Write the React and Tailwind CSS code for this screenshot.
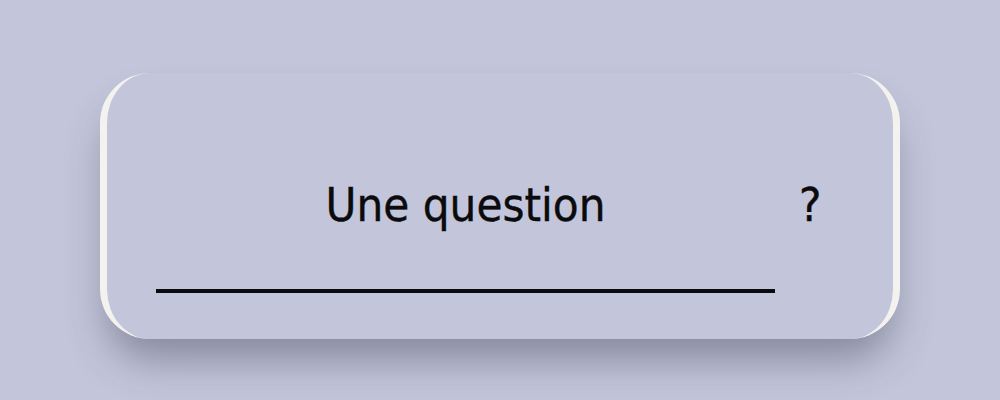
import React from "react";

const App = () => {
  return (
    <div className="w-[1000px] h-[400px] bg-[#c3c6da] pt-[73px] px-[100px] overflow-hidden">
      {/* Card */}
      <div className="h-[266px] rounded-[50px] border-x-[7px] border-[#f4f2ef] bg-[#c3c6da] shadow-[0_28px_40px_-8px_rgba(60,62,85,0.45)] pl-[49px] pt-[102px]">
        <div className="flex items-start">
          <div className="w-[619px] flex flex-col items-center">
            <span className="text-[47px] leading-[60px] text-[#0b0b0d] [-webkit-text-stroke:0.4px_#0b0b0d] font-['DejaVu_Sans_Condensed','DejaVu_Sans',sans-serif]">
              Une question
            </span>
            <div className="mt-[54px] w-full h-[4px] bg-[#0b0b0d]" />
          </div>
          <span className="ml-[24px] text-[47px] leading-[60px] text-[#0b0b0d] [-webkit-text-stroke:0.4px_#0b0b0d] font-['DejaVu_Sans_Condensed','DejaVu_Sans',sans-serif]">
            ?
          </span>
        </div>
      </div>
    </div>
  );
};

export default App;
